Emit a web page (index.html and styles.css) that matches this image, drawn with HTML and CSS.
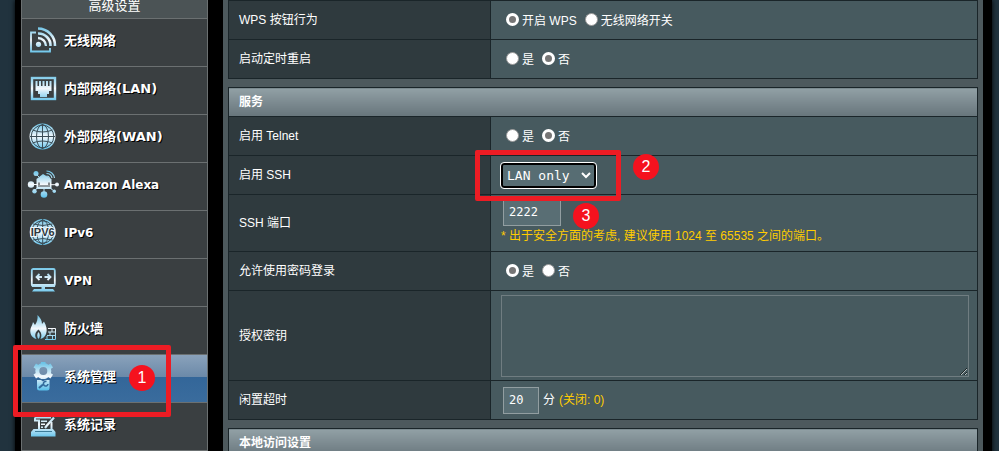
FILE: index.html
```html
<!DOCTYPE html>
<html lang="zh-CN">
  <head>
    <title>系统管理</title>
    <meta charset="UTF-8" />
    <link rel="stylesheet" href="styles.css">
  </head>
  <body>
    <svg class="defs" width="0" height="0" aria-hidden="true">
      <defs>
        <linearGradient id="ice" gradientUnits="userSpaceOnUse" x1="0" y1="2" x2="0" y2="29">
          <stop offset="0" stop-color="#6cc3e6" />
          <stop offset="0.5" stop-color="#f4f8fc" />
          <stop offset="0.65" stop-color="#c4e6f6" />
          <stop offset="1" stop-color="#5ac0ea" />
        </linearGradient>
      </defs>
    </svg>

    <div class="router">
      <nav class="menu">
        <div class="menu-title">高级设置</div>
        <a class="item" href="#wireless">
          <svg class="icon" viewBox="0 0 32 32">
            <g class="line">
              <path d="M9 7.500H4V26.500H23V23" stroke-width="1.800" />
              <path d="M11 3.500A17 17 0 0 1 28 21" stroke-width="2.600" />
              <path d="M11 8.500A12 12 0 0 1 23.500 21" stroke-width="2.600" />
              <path d="M11 13A8 8 0 0 1 19 21" stroke-width="2.300" />
            </g>
            <circle class="fill" cx="11.500" cy="19.300" r="2.600" />
          </svg>
          <span class="zh">无线网络</span>
        </a>
        <a class="item" href="#lan">
          <svg class="icon" viewBox="0 0 32 32">
            <rect class="line" x="5" y="5" width="23" height="21" stroke-width="2.400" />
            <path class="fill" d="M8.500 8H10.500V13H12V8H14V13H15.500V8H17.500V13H19V8H21V13H22.500V8H24.500V18H22V21H20V24H13V21H11V18H8.500Z" />
          </svg>
          <span class="zh">内部网络(LAN)</span>
        </a>
        <a class="item" href="#wan">
          <svg class="icon" viewBox="0 0 32 32">
            <circle class="fill" cx="15.500" cy="15.500" r="13" />
            <g class="cut">
              <ellipse cx="15.500" cy="15.500" rx="6" ry="12" />
              <circle cx="15.500" cy="15.500" r="11.300" />
              <path d="M15.500 3V28M3 15.500H28M5.500 9Q15.500 13 25.500 9M5.500 22Q15.500 18 25.500 22" />
            </g>
          </svg>
          <span class="zh">外部网络(WAN)</span>
        </a>
        <a class="item" href="#alexa">
          <svg class="icon" viewBox="0 0 32 32">
            <g class="line" stroke-width="1">
              <path d="M9 5L13 9M4 15.500H10M24 15.700H29M7.500 22L11 18M17 20V25M27 22L23 19" />
              <path d="M19.500 2A8 8 0 0 1 27.500 9M19.500 4.500A5.500 5.500 0 0 1 25 9M19.500 7A3 3 0 0 1 22.500 9" stroke-width="1.200" />
            </g>
            <path class="fill" d="M9.500 10L16 5L24.500 10V20H9.500Z" />
            <path d="M12 13.500V16M22 13.500V16M11 17H23" stroke="#3c4042" stroke-width="1.200" />
            <g class="fill">
              <circle cx="9" cy="4.500" r="2.500" />
              <circle cx="4" cy="15.500" r="3.200" />
              <circle cx="30" cy="15.500" r="2" />
              <circle cx="7.500" cy="22.300" r="2.200" />
              <circle cx="17" cy="25.500" r="3.300" />
              <circle cx="27.300" cy="22.300" r="1.700" />
            </g>
          </svg>
          <span>Amazon Alexa</span>
        </a>
        <a class="item" href="#ipv6">
          <svg class="icon" viewBox="0 0 32 32">
            <circle class="fill" cx="15.700" cy="15" r="13" />
            <g class="cut">
              <ellipse cx="15.700" cy="15" rx="6" ry="12" />
              <circle cx="15.700" cy="15" r="11.200" />
              <path d="M15.700 2V28M6 7Q15.700 10 25.500 7M6 23Q15.700 20 25.500 23" />
            </g>
            <text class="v6" x="15.700" y="19" text-anchor="middle">IPV6</text>
          </svg>
          <span>IPv6</span>
        </a>
        <a class="item" href="#vpn">
          <svg class="icon" viewBox="0 0 32 32">
            <rect class="line" x="4.800" y="4" width="23" height="17" rx="1.500" stroke-width="1.800" />
            <path class="fill" d="M5 19H28V22H5ZM14.500 22H18V24H26L28 26.500H5L7 24H14.500Z" />
            <path class="line" d="M9.500 12H15M12.500 9L9.500 12L12.500 15M17.500 12H23.500M20.500 9L23.500 12L20.500 15" stroke-width="1.800" />
          </svg>
          <span>VPN</span>
        </a>
        <a class="item" href="#firewall">
          <svg class="icon" viewBox="0 0 32 32">
            <path class="fill" d="M10.500 2C13 4.500 15 7 15 11L17 8.500C19.500 13 20.500 17 19 21Q17.500 25 13.500 26C15.500 22 14 19 11.500 16.500C8.500 19 7 22 9.500 26C4.500 25 2.500 20 3.500 16C4 13.500 5.500 12 6 9L8 12C10 9 11 6 10.500 2Z" />
            <path class="fill" d="M11.500 19C13 21 13.500 23.500 11.500 26C9.500 23.500 10 21 11.500 19Z" />
            <path class="line" d="M21 15.500H28.500V26.500H18M21 19H28.500M20 22.500H28.500M25 15.500V19M23 19V22.500M25.500 22.500V26.500M20 26V23" stroke-width="1" />
          </svg>
          <span class="zh">防火墙</span>
        </a>
        <a class="item selected" href="#admin">
          <svg class="icon" viewBox="0 0 32 32">
            <circle class="line" cx="16.300" cy="10" r="6" stroke-width="4" />
            <path class="fill" d="M14 1H18.500V5H14ZM14 15H18.500V18H14ZM6.500 6.500L9 2.500L13 5L10.500 9ZM26 6.500L23.500 2.500L19.500 5L22 9ZM6.500 13.500L9 17.500L13 15L10.500 11ZM26 13.500L23.500 17.500L19.500 15L22 11Z" />
            <path class="fill" d="M10 19H14L16 20.500L18.500 19H22.500V27Q22.500 29.500 20 29.500H12.500Q10 29.500 10 27Z" />
            <path d="M12 27L16 23.500" fill="none" stroke="#336a9b" stroke-width="2" />
            <path d="M19.500 20.500A2.300 2.300 0 1 0 21 23" fill="none" stroke="#336a9b" stroke-width="1.600" />
          </svg>
          <span class="zh">系统管理</span>
          <span class="mark-box mark-menu"></span>
          <span class="mark-dot dot-1">1</span>
        </a>
        <a class="item" href="#log">
          <svg class="icon" viewBox="0 0 32 32">
            <path class="line" d="M8 8.500H24M8 8.500V11.500H12V20M24.500 13V20" stroke-width="2" />
            <path class="line" d="M14 12.200H20M14 15.200H18M14 18.200H16" stroke-width="1.600" />
            <path class="line" d="M27 8.500L19.500 17L18 19" stroke-width="2.200" />
            <path class="fill" d="M6.500 20H26L28.500 23V27.500H4V23Z" />
            <path d="M8 22.500H25" stroke="#3c7c99" stroke-width="1" />
          </svg>
          <span class="zh">系统记录</span>
        </a>
      </nav>

      <main class="content">
        <table class="form">
          <colgroup><col class="name"><col></colgroup>
          <tr>
            <th>WPS 按钮行为</th>
            <td>
              <div class="radios">
                <label><input type="radio" name="wps" checked>开启 WPS</label>
                <label><input type="radio" name="wps">无线网络开关</label>
              </div>
            </td>
          </tr>
          <tr>
            <th>启动定时重启</th>
            <td>
              <div class="radios">
                <label><input type="radio" name="reboot">是</label>
                <label><input type="radio" name="reboot" checked>否</label>
              </div>
            </td>
          </tr>
        </table>

        <table class="form">
          <colgroup><col class="name"><col></colgroup>
          <thead>
            <tr><th colspan="2">服务</th></tr>
          </thead>
          <tbody>
            <tr>
              <th>启用 Telnet</th>
              <td>
                <div class="radios">
                  <label><input type="radio" name="telnet">是</label>
                  <label><input type="radio" name="telnet" checked>否</label>
                </div>
              </td>
            </tr>
            <tr>
              <th><label for="ssh">启用 SSH</label></th>
              <td>
                <div class="marked">
                  <select id="ssh">
                    <option>LAN only</option>
                  </select>
                  <span class="mark-box mark-ssh"></span>
                  <span class="mark-dot dot-2">2</span>
                  <span class="mark-dot dot-3">3</span>
                </div>
              </td>
            </tr>
            <tr class="port">
              <th><label for="port">SSH 端口</label></th>
              <td>
                <input class="text" id="port" type="text" value="2222">
                <div class="hint">* 出于安全方面的考虑, 建议使用 1024 至 65535 之间的端口。</div>
              </td>
            </tr>
            <tr>
              <th>允许使用密码登录</th>
              <td>
                <div class="radios">
                  <label><input type="radio" name="password" checked>是</label>
                  <label><input type="radio" name="password">否</label>
                </div>
              </td>
            </tr>
            <tr class="keys">
              <th><label for="keys">授权密钥</label></th>
              <td><textarea id="keys"></textarea></td>
            </tr>
            <tr>
              <th><label for="idle">闲置超时</label></th>
              <td>
                <div class="idle">
                  <input class="text short" id="idle" type="text" value="20">
                  <span>分</span>
                  <span class="hint">(关闭: 0)</span>
                </div>
              </td>
            </tr>
          </tbody>
        </table>

        <table class="form">
          <thead>
            <tr><th>本地访问设置</th></tr>
          </thead>
        </table>
      </main>
    </div>
  </body>
</html>
```

FILE: styles.css
```css
* {
  box-sizing: border-box;
}

body {
  margin: 0;
  height: 100vh;
  overflow: hidden;
  background: #21333e;
  color: #fff;
  font: 12px/16px "Liberation Sans", Arial, "Noto Sans CJK SC", sans-serif;
}

.defs {
  position: absolute;
}

.router {
  display: flex;
  gap: 15px;
  min-height: 100vh;
  margin: 0 7px 0 15px;
  padding: 0 9px 0 6px;
  background: #000;
  box-shadow: 0 0 5px #000;
}

/* left menu */
.menu {
  flex: 0 0 187px;
  align-self: flex-start;
  border: 1px solid #6b7071;
  border-top: 0;
  background: #3a3f41;
}

.menu-title {
  height: 18px;
  background: #4b5355;
  font-size: 13px;
  line-height: 12px;
  text-align: center;
}

.item {
  position: relative;
  display: flex;
  align-items: center;
  gap: 5px;
  height: 48px;
  padding: 0 0 3px 5px;
  border-top: 1px solid #6b7071;
  color: #fff;
  font-family: "DejaVu Sans", Verdana, "Noto Sans CJK SC", sans-serif;
  font-weight: bold;
  text-decoration: none;
  text-shadow: 1px 1px 0 #000;
}

.zh {
  font-size: 13px;
}

.selected {
  background: linear-gradient(#8aa2bb, #6c8aa9 46%, #336699 46%, #3a6c9d);
}

.icon {
  width: 32px;
  height: 32px;
}

.fill {
  fill: url(#ice);
}

.line {
  fill: none;
  stroke: url(#ice);
}

.cut {
  fill: none;
  stroke: #3a4d57;
  stroke-width: 1;
}

.v6 {
  fill: #30383c;
  stroke: #eef7fc;
  stroke-width: 2px;
  paint-order: stroke;
  font: bold 11px "Liberation Sans", Arial, sans-serif;
  text-shadow: none;
}

/* settings */
.content {
  flex: 1;
  padding: 0 5px;
  background: #4d595d;
}

.form {
  width: 100%;
  margin-bottom: 8px;
  border-collapse: collapse;
  table-layout: fixed;
}

.name {
  width: 262px;
}

.form th,
.form td {
  height: 39px;
  padding: 0 8px 0 10px;
  border: 1px solid #1a2529;
  text-align: left;
}

.form th {
  background: #2f3a3e;
  font-weight: normal;
}

.form td {
  background: #475a5f;
}

.form thead th {
  height: 29px;
  background: linear-gradient(#91a0a5, #67757b);
  font-weight: bold;
}

.form .port td {
  height: 57px;
  padding-bottom: 4px;
}

.form .keys td {
  height: 90px;
}

.radios {
  display: flex;
  gap: 8px;
  padding: 2px 0 0 5px;
}

.radios label {
  display: flex;
  gap: 3px;
}

input[type="radio"] {
  appearance: none;
  width: 13px;
  height: 13px;
  margin: 0;
  border: 1px solid #999;
  border-radius: 50%;
  background: #fff;
}

input[type="radio"]:checked {
  border: 3px solid #fff;
  background: #767676;
}

select {
  display: block;
  width: 95px;
  height: 25px;
  padding: 0;
  border: 2px solid #000;
  border-radius: 3px;
  outline: 1px solid #fff;
  background: #576d73;
  color: #fff;
  font: 13px "DejaVu Sans Mono", monospace;
}

.text {
  display: block;
  width: 58px;
  height: 27px;
  margin: 0 0 2px 2px;
  padding: 0 5px;
  border: 1px solid #929ea1;
  background: #596e74;
  color: #fff;
  font: 12px "DejaVu Sans Mono", monospace;
}

.short {
  width: 36px;
  margin-bottom: 0;
}

.hint {
  color: #fc0;
}

.idle {
  display: flex;
  align-items: center;
  gap: 4px;
}

textarea {
  display: block;
  width: 100%;
  height: 82px;
  border: 1px solid #707d81;
  background: #475a5f;
  color: #fff;
}

/* numbered steps */
.marked {
  position: relative;
}

.mark-box {
  position: absolute;
  z-index: 1;
  border: 5px solid #ed1c24;
  border-radius: 2px;
}

.mark-dot {
  position: absolute;
  z-index: 1;
  width: 26px;
  height: 26px;
  border-radius: 50%;
  background: #f5121e;
  font: 16px/26px "Liberation Sans", Arial, sans-serif;
  text-align: center;
  text-shadow: none;
}

.mark-menu {
  top: -10px;
  left: -9px;
  width: 158px;
  height: 72px;
}

.dot-1 {
  top: 10px;
  left: 107px;
}

.mark-ssh {
  top: -13px;
  left: -26px;
  width: 146px;
  height: 51px;
}

.dot-2 {
  top: -9px;
  left: 132px;
}

.dot-3 {
  top: 40px;
  left: 72px;
}
```
